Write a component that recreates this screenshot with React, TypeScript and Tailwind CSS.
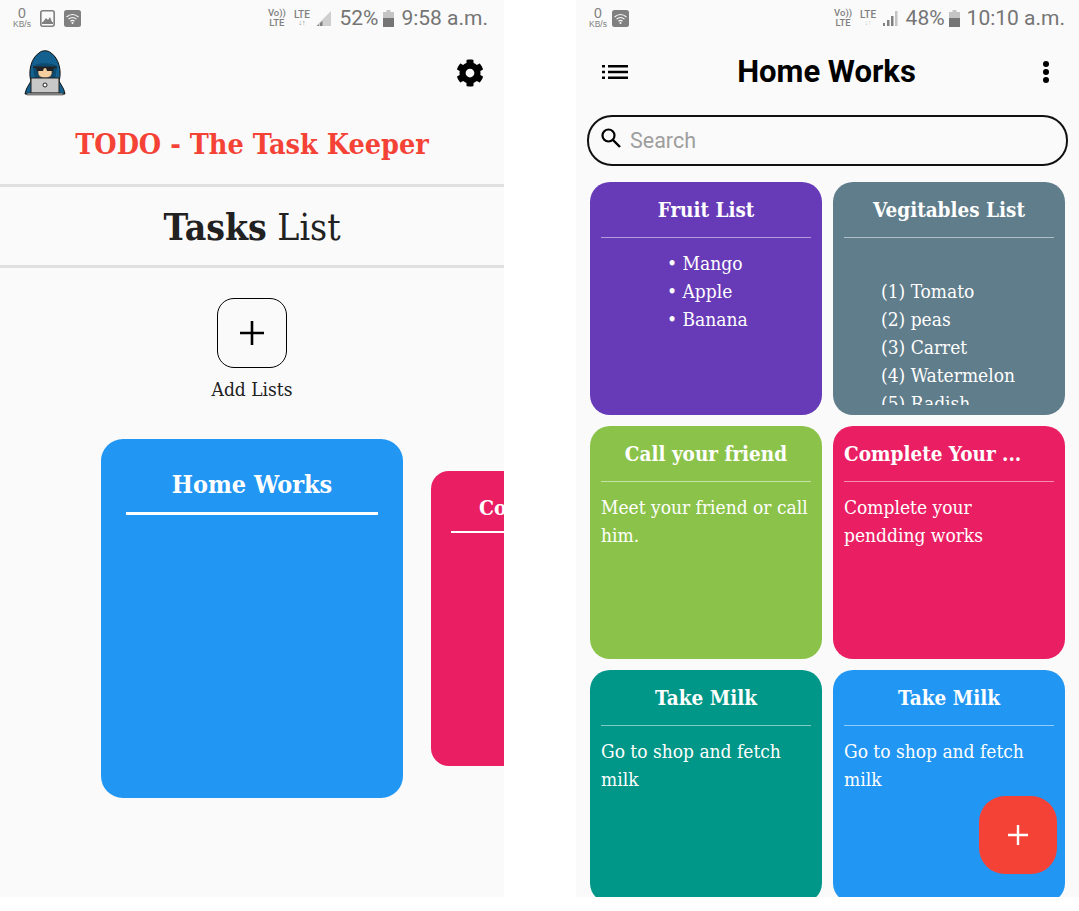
import type { ReactNode } from "react";
import { FaCog } from "react-icons/fa";

const slab = "font-['DejaVu_Serif_Condensed','DejaVu_Serif',serif]";

function Wifi() {
  return (
    <svg width="17" height="17" viewBox="0 0 17 17">
      <rect width="17" height="17" rx="2.5" fill="#808080" />
      <path d="M2.5 7 Q8.5 2 14.5 7 M4.5 9.2 Q8.5 5.8 12.5 9.2 M6.5 11.2 Q8.5 9.6 10.5 11.2" stroke="#fafafa" strokeWidth="1.1" fill="none" />
      <circle cx="8.5" cy="13" r="1" fill="#fafafa" />
    </svg>
  );
}

function Kb() {
  return (
    <div className="flex flex-col items-center w-[20px] text-[#808080] font-['Liberation_Sans',sans-serif]">
      <span className="text-[14px] leading-[13px] font-medium">0</span>
      <span className="text-[8.5px] leading-[9px]">KB/s</span>
    </div>
  );
}

function Lte({ full, dim }: { full: boolean; dim: boolean }) {
  return (
    <div className="flex items-center text-[#808080] font-['Roboto',sans-serif]">
      <div className="flex flex-col items-center text-[9.5px] leading-[10px] font-medium w-[17px]">
        <span>Vo))</span>
        <span>LTE</span>
      </div>
      <div className="flex flex-col items-center text-[10px] leading-[10px] font-medium w-[17px] ml-[8px]">
        <span>LTE</span>
        <span className={`text-[7px] leading-[7px] font-bold ${dim ? "text-[#c4c4c4]" : ""}`}>↓↑</span>
      </div>
      <svg width="17" height="17" viewBox="0 0 17 17" className="ml-[5px]">
        {full ? (
          <>
            <rect x="1" y="13" width="2" height="3" fill="#808080" />
            <rect x="5" y="10" width="2.5" height="6" fill="#808080" />
            <rect x="9" y="6" width="2.5" height="10" fill="#808080" />
            <rect x="13" y="1" width="2.5" height="15" fill="#c4c4c4" />
          </>
        ) : (
          <>
            <path d="M16 1V16H1Z" fill="#cfcfcf" />
            <path d="M2 16L4 14V16ZM5 13L7.5 11V16H5Z" fill="#808080" />
          </>
        )}
      </svg>
    </div>
  );
}

function Battery({ fill }: { fill: number }) {
  return (
    <svg width="11" height="17" viewBox="0 0 11 17">
      <rect x="3.5" y="0" width="4" height="2" fill="#c4c4c4" />
      <rect x="0" y="2" width="11" height="15" fill="#c4c4c4" />
      <rect x="0" y={17 - fill} width="11" height={fill} fill="#757575" />
    </svg>
  );
}

function Avatar() {
  return (
    <svg width="42" height="46" viewBox="0 0 42 46">
      <path d="M1 44 C2 38 5 35 7 31 C4 22 7 8 15 3 C18 0 24 0 27 3 C35 8 38 22 35 31 C37 35 40 38 41 44Z" fill="#14608f" stroke="#111" strokeWidth="1" />
      <path d="M9 17 C10 12 32 12 33 17 L31 29 H11Z" fill="#0d4a70" />
      <path d="M14 18 H28 V23 C28 26 25 28 21 28 C17 28 14 26 14 23Z" fill="#f6cfa0" stroke="#222" strokeWidth="0.6" />
      <path d="M9 16.5 H33 V18 H30 L29 21 H23 L22 18 H20 L19 21 H13 L12 18 H9Z" fill="#222" />
      <rect x="7" y="28" width="28" height="15" fill="#c8c8c8" stroke="#222" strokeWidth="1" />
      <circle cx="21" cy="35" r="2" fill="#fff" stroke="#222" strokeWidth="1" />
      <rect x="3" y="43" width="36" height="2" fill="#9a9a9a" stroke="#222" strokeWidth="0.5" />
    </svg>
  );
}

function LeftPhone() {
  return (
    <div className="w-[504px] h-[897px] bg-[#fafafa] overflow-hidden flex flex-col shrink-0">
      <div className="h-9 shrink-0 flex items-center justify-between pl-[12px] pr-[16px]">
        <div className="flex items-center">
          <Kb />
          <svg width="15" height="17" viewBox="0 0 15 17" className="ml-[8px]">
            <rect x="0.8" y="0.8" width="13.4" height="15.4" rx="2" fill="#fafafa" stroke="#808080" strokeWidth="1.6" />
            <path d="M3 12 L6 8 L8 10 L10 7 L12 12Z" fill="#808080" />
            <rect x="2" y="12" width="11" height="2" fill="#808080" />
          </svg>
          <div className="ml-[9px]"><Wifi /></div>
        </div>
        <div className="flex items-center font-['Roboto',sans-serif] text-[#757575] text-[21px]">
          <Lte full={false} dim={false} />
          <span className="ml-[7px] mt-px">52%</span>
          <div className="ml-[5px]"><Battery fill={9} /></div>
          <span className="ml-[7px] mt-px">9:58 a.m.</span>
        </div>
      </div>
      <div className="h-[72px] shrink-0 flex items-center justify-between pl-[24px] pr-[20px]">
        <div className="mt-px"><Avatar /></div>
        <FaCog size={28} color="#000" className="mt-[2px]" />
      </div>
      <div className={`h-[68px] shrink-0 flex justify-center ${slab} text-[#f44336] font-bold text-[28.5px] leading-[72px]`}>
        TODO - The Task Keeper
      </div>
      <div className="h-[3px] shrink-0 bg-[#e0e0e0] mt-[8px]" />
      <div className={`h-[78px] shrink-0 flex items-center justify-center ${slab} text-[#212121] text-[37px] pt-[4px]`}>
        <span><b>Tasks</b> List</span>
      </div>
      <div className="h-[3px] shrink-0 bg-[#e0e0e0]" />
      <div className="flex flex-col items-center mt-[30px] shrink-0">
        <div className="w-[70px] h-[70px] rounded-[17px] border-[1.5px] border-black flex items-center justify-center">
          <svg width="26" height="26" viewBox="0 0 26 26">
            <path d="M13 1V25M1 13H25" stroke="#000" strokeWidth="2.6" />
          </svg>
        </div>
        <span className={`${slab} text-[#212121] text-[19px] leading-[22px] mt-[10px]`}>Add Lists</span>
      </div>
      <div className="flex items-center gap-[28px] pl-[101px] mt-[39px] h-[359px] w-[504px] overflow-hidden shrink-0">
        <div className="w-[302px] h-[359px] shrink-0 rounded-[22px] bg-[#2196f3] px-[25px] pt-[28px]">
          <div className={`${slab} text-white font-bold text-[25px] leading-[36px] text-center`}>Home Works</div>
          <div className="h-[2.5px] bg-white mt-[9px]" />
        </div>
        <div className="w-[280px] h-[295px] shrink-0 rounded-[18px] bg-[#e91e63] px-[20px] pt-[22px]">
          <div className={`${slab} text-white font-bold text-[21px] leading-[30px] whitespace-nowrap pl-[28px]`}>Complete</div>
          <div className="h-[2px] bg-white mt-[8px]" />
        </div>
      </div>
    </div>
  );
}

function Note({ color, title, left, children }: { color: string; title: string; left?: boolean; children: ReactNode }) {
  return (
    <div className={`${color} h-[233px] rounded-[20px] px-[11px] pt-[14px] pb-[10px] flex flex-col overflow-hidden`}>
      <div className={`${slab} text-white font-bold text-[20.5px] leading-[28px] h-[28px] whitespace-nowrap shrink-0 ${left ? "text-left" : "text-center"}`}>{title}</div>
      <div className="h-px bg-white/50 mt-[13px] shrink-0" />
      <div className={`${slab} text-white text-[19px] leading-[28px] mt-[11px] overflow-hidden flex-1`}>{children}</div>
    </div>
  );
}

function RightPhone() {
  return (
    <div className="relative w-[503px] h-[897px] bg-[#fafafa] overflow-hidden flex flex-col shrink-0">
      <div className="h-9 shrink-0 flex items-center justify-between pl-[12px] pr-[14px]">
        <div className="flex items-center">
          <Kb />
          <div className="ml-[4px]"><Wifi /></div>
        </div>
        <div className="flex items-center font-['Roboto',sans-serif] text-[#757575] text-[21px]">
          <Lte full dim />
          <span className="ml-[7px] mt-px">48%</span>
          <div className="ml-[4px]"><Battery fill={9} /></div>
          <span className="ml-[7px] mt-px">10:10 a.m.</span>
        </div>
      </div>
      <div className="h-[72px] shrink-0 flex items-center pl-[26px] pr-[29px]">
        <div className="flex-1">
          <svg width="26" height="14" viewBox="0 0 26 14" className="block">
            <path d="M0 0H3V2.6H0ZM0 5.7H3V8.3H0ZM0 11.4H3V14H0ZM6 0H26V2.6H6ZM6 5.7H26V8.3H6ZM6 11.4H26V14H6Z" fill="#000" />
          </svg>
        </div>
        <span className="font-['Roboto',sans-serif] font-bold text-[31px] text-black ml-px">Home Works</span>
        <div className="flex-1 flex justify-end">
          <svg width="8" height="24" viewBox="0 0 8 24" className="block">
            <circle cx="4" cy="4" r="3" fill="#000" />
            <circle cx="4" cy="12" r="3" fill="#000" />
            <circle cx="4" cy="20" r="3" fill="#000" />
          </svg>
        </div>
      </div>
      <div className="mx-[11px] h-[51px] w-[481px] mt-[7px] rounded-[25px] border-[2px] border-[#111] flex items-center pl-[11px] shrink-0">
        <svg width="22" height="22" viewBox="0 0 22 22" className="mb-[6px]">
          <circle cx="8.5" cy="8.5" r="6" stroke="#000" strokeWidth="2.2" fill="none" />
          <path d="M13 13L20 20" stroke="#000" strokeWidth="2.4" />
        </svg>
        <span className="ml-[8px] mt-px font-['Roboto',sans-serif] text-[21.5px] text-[#9e9e9e]">Search</span>
      </div>
      <div className="grid grid-cols-[232px_232px] gap-x-[11px] gap-y-[11px] pl-[14px] mt-[16px] shrink-0">
        <Note color="bg-[#673ab7]" title="Fruit List">
          <div className="pl-[66px]">
            <div>• Mango</div>
            <div>• Apple</div>
            <div>• Banana</div>
          </div>
        </Note>
        <Note color="bg-[#607d8b]" title="Vegitables List">
          <div className="pl-[37px] pt-[28px]">
            <div>(1) Tomato</div>
            <div>(2) peas</div>
            <div>(3) Carret</div>
            <div>(4) Watermelon</div>
            <div>(5) Radish</div>
          </div>
        </Note>
        <Note color="bg-[#8bc34a]" title="Call your friend">Meet your friend or call him.</Note>
        <Note color="bg-[#e91e63]" title="Complete Your ..." left>Complete your pendding works</Note>
        <Note color="bg-[#009688]" title="Take Milk">Go to shop and fetch milk</Note>
        <Note color="bg-[#2196f3]" title="Take Milk">Go to shop and fetch milk</Note>
      </div>
      <div className="absolute left-[403px] top-[796px] w-[78px] h-[78px] rounded-[26px] bg-[#f44336] flex items-center justify-center">
        <svg width="20" height="20" viewBox="0 0 20 20">
          <path d="M10 0V20M0 10H20" stroke="#fff" strokeWidth="2.4" />
        </svg>
      </div>
    </div>
  );
}

export default function App() {
  return (
    <div className="w-[1079px] h-[911px] bg-white flex gap-[72px] overflow-hidden">
      <LeftPhone />
      <RightPhone />
    </div>
  );
}
